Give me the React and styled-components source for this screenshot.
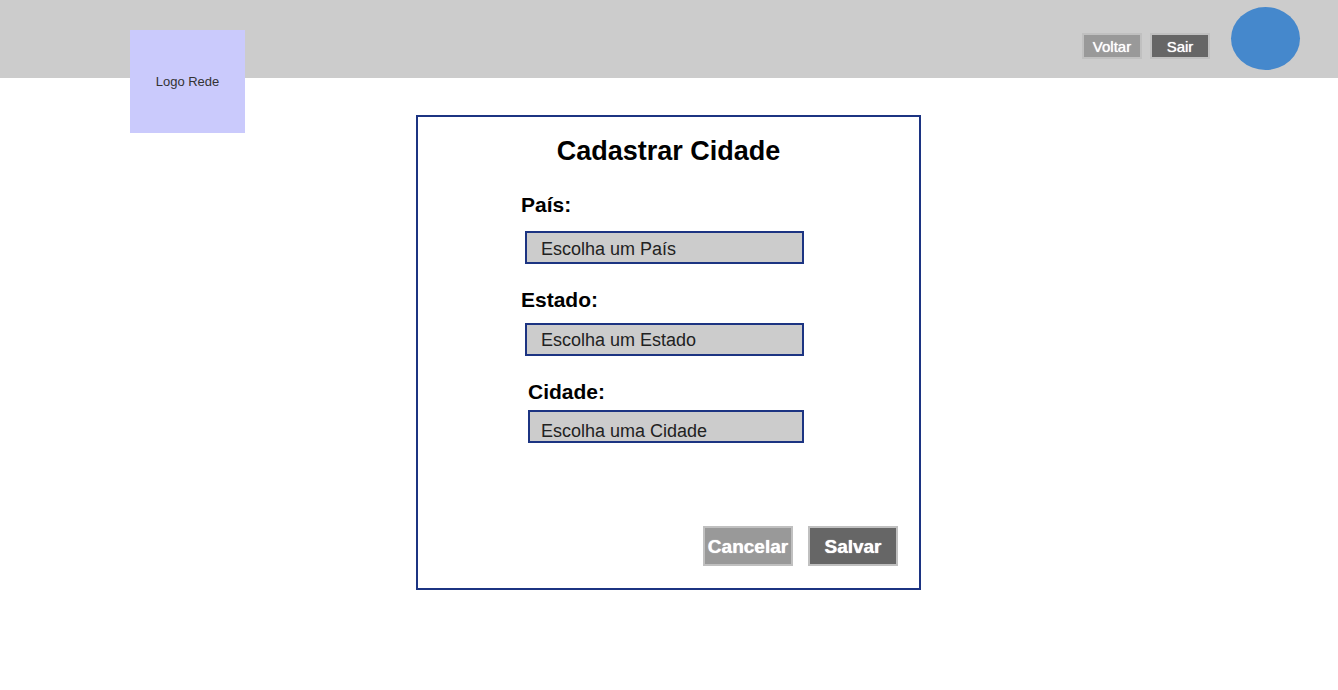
import React from "react";
import styled, { createGlobalStyle } from "styled-components";

const GlobalStyle = createGlobalStyle`
  *, *::before, *::after { box-sizing: border-box; }
  body {
    margin: 0;
    background: #fff;
    color: #000;
    font-family: "Liberation Sans", Arial, sans-serif;
  }
`;

const Header = styled.header`
  display: flex;
  align-items: flex-start;
  height: 78px;
  padding: 0 38px 0 130px;
  background: #ccc;
`;

const Logo = styled.a`
  display: flex;
  align-items: center;
  justify-content: center;
  width: 115px;
  height: 103px;
  margin-top: 30px;
  background: #cacafc;
  color: #333;
  font-size: 13px;
  text-decoration: none;
`;

const HeaderActions = styled.nav`
  display: flex;
  gap: 8px;
  margin: 33px 21px 0 auto;
`;

const Button = styled.button`
  display: flex;
  align-items: center;
  justify-content: center;
  width: 60px;
  height: 26px;
  padding: 0;
  border: 2px solid #c0c0c0;
  background: ${({ $dark }) => ($dark ? "#666" : "#999")};
  color: #fff;
  font-family: inherit;
  font-size: 15px;
  text-shadow: 0 0 1px #fff;
  cursor: pointer;
`;

const FormButton = styled(Button)`
  width: 90px;
  height: 40px;
  padding-top: 2px;
  font-size: 19px;
  font-weight: bold;
`;

const Avatar = styled.div`
  width: 69px;
  height: 63px;
  margin-top: 7px;
  border-radius: 50%;
  background: #4588cc;
`;

const Main = styled.main`
  display: flex;
  justify-content: center;
  padding: 37px 17px 37px 16px;
`;

const Card = styled.form`
  display: flex;
  flex-direction: column;
  width: 100%;
  max-width: 505px;
  padding: 18px 21px 22px;
  border: 2px solid #1c3482;
`;

const Title = styled.h1`
  margin: 0 0 26px;
  font-size: 27px;
  line-height: 32px;
  text-align: center;
`;

const Fields = styled.div`
  display: flex;
  flex-direction: column;
  gap: 24px;
  padding: 0 94px 0 82px;
`;

const Field = styled.div`
  display: flex;
  flex-direction: column;
  gap: ${({ $gap }) => $gap}px;
  padding-left: ${({ $inset }) => $inset}px;
`;

const Label = styled.label`
  font-size: 21px;
  font-weight: bold;
  line-height: 24px;
`;

const Select = styled.select`
  appearance: none;
  height: 33px;
  margin-left: ${({ $indent }) => $indent}px;
  padding: ${({ $drop }) => $drop}px 14px 0 ${({ $pad }) => $pad}px;
  border: 2px solid #1c3482;
  border-radius: 0;
  background: #ccc;
  color: #222;
  font-family: inherit;
  font-size: 18px;
`;

const FormActions = styled.div`
  display: flex;
  justify-content: flex-end;
  gap: 15px;
  margin-top: 83px;
`;

const fields = [
  { id: "pais", label: "País:", prompt: "Escolha um País", gap: 14, inset: 0, indent: 4, pad: 14, drop: 2 },
  { id: "estado", label: "Estado:", prompt: "Escolha um Estado", gap: 11, inset: 0, indent: 4, pad: 14, drop: 0 },
  { id: "cidade", label: "Cidade:", prompt: "Escolha uma Cidade", gap: 6, inset: 7, indent: 0, pad: 11, drop: 8 },
];

export default function App() {
  return (
    <>
      <GlobalStyle />
      <Header>
        <Logo href="#">Logo Rede</Logo>
        <HeaderActions>
          <Button type="button">Voltar</Button>
          <Button type="button" $dark>Sair</Button>
        </HeaderActions>
        <Avatar />
      </Header>
      <Main>
        <Card>
          <Title>Cadastrar Cidade</Title>
          <Fields>
            {fields.map((f) => (
              <Field key={f.id} $gap={f.gap} $inset={f.inset}>
                <Label htmlFor={f.id}>{f.label}</Label>
                <Select id={f.id} name={f.id} $indent={f.indent} $pad={f.pad} $drop={f.drop}>
                  <option>{f.prompt}</option>
                </Select>
              </Field>
            ))}
          </Fields>
          <FormActions>
            <FormButton type="button">Cancelar</FormButton>
            <FormButton type="submit" $dark>Salvar</FormButton>
          </FormActions>
        </Card>
      </Main>
    </>
  );
}
